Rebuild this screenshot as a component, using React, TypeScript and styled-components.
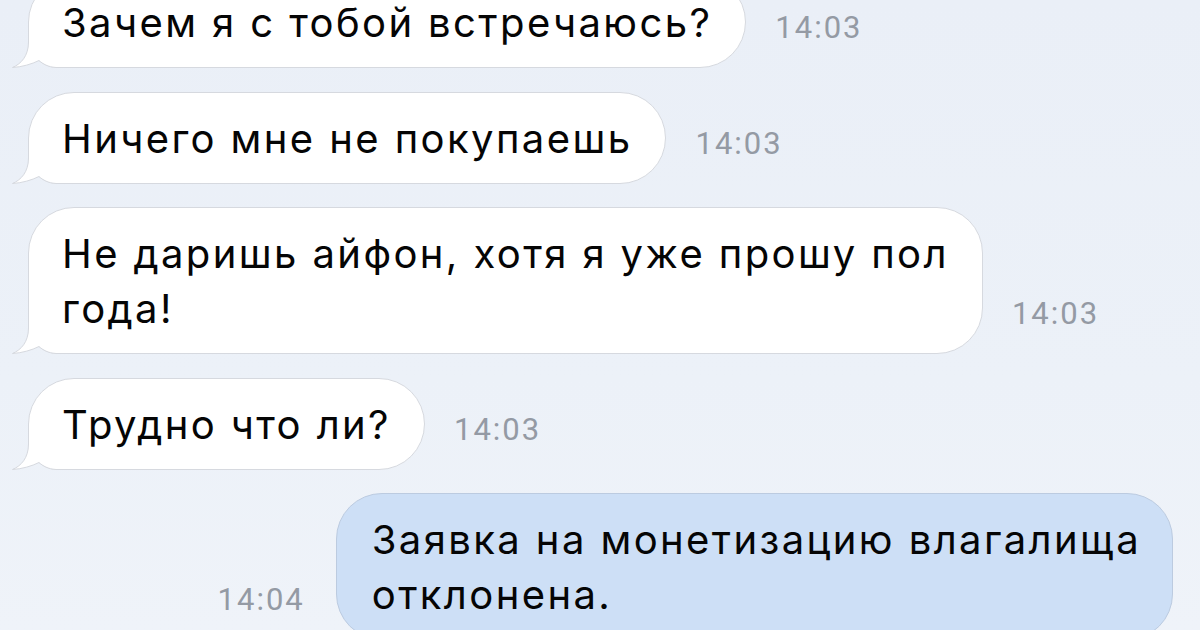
import React from "react";
import styled, { createGlobalStyle } from "styled-components";

const GlobalStyle = createGlobalStyle`
  html, body {
    margin: 0;
    padding: 0;
  }
  body {
    font-family: Inter, Roboto, "Noto Sans", sans-serif;
    -webkit-font-smoothing: antialiased;
  }
`;

const Screen = styled.div`
  width: 1200px;
  height: 630px;
  overflow: hidden;
  background: linear-gradient(180deg, #eaeff7 0%, #ecf1f8 60%, #eff3f9 100%);
`;

const Feed = styled.div`
  display: flex;
  flex-direction: column;
  gap: 23.5px;
  margin-top: -24px;
`;

const Row = styled.div<{ $out?: boolean }>`
  display: flex;
  align-items: flex-end;
  justify-content: ${(p) => (p.$out ? "flex-end" : "flex-start")};
  padding: ${(p) => (p.$out ? "0 27px 0 0" : "0 0 0 28px")};
`;

const Bubble = styled.div<{ $out?: boolean }>`
  position: relative;
  box-sizing: border-box;
  max-width: 960px;
  padding: ${(p) => (p.$out ? "18px 31px 17px 35px" : "18px 33px 17px 33px")};
  font-family: Inter, Roboto, sans-serif;
  font-size: 40px;
  line-height: 55px;
  letter-spacing: 2.4px;
  color: #050505;
  white-space: nowrap;
  background: ${(p) => (p.$out ? "#cddff6" : "#ffffff")};
  border: 1px solid ${(p) => (p.$out ? "#bccbe0" : "#d6d9df")};
  border-radius: 46px;
  border-bottom-left-radius: ${(p) => (p.$out ? "46px" : "30px")};
`;

const Time = styled.span<{ $out?: boolean }>`
  flex: none;
  font-family: Roboto, sans-serif;
  font-size: 31px;
  line-height: 30px;
  letter-spacing: 2px;
  color: #949aa4;
  padding-bottom: 25px;
  margin: ${(p) => (p.$out ? "0 31px 0 0" : "0 0 0 29px")};
`;

const TailSvg = styled.svg`
  position: absolute;
  left: -17px;
  bottom: -1px;
  width: 48px;
  height: 40px;
  overflow: visible;
`;

const Tail = () => (
  <TailSvg viewBox="0 0 48 40">
    <path
      d="M16.5,0 L16.5,14 C16.5,28 9,36 0.5,39.5 C10,39 20,36 27,32.5 C31,36 36,39 44,39.5 L48,39.5 L48,0 Z"
      fill="#ffffff"
    />
    <path
      d="M16.5,0 L16.5,14 C16.5,28 9,36 0.5,39.5 C10,39 20,36 27,32.5 C31,36 36,39 44,39.5 L48,39.5"
      fill="none"
      stroke="#d6d9df"
      strokeWidth="1"
    />
  </TailSvg>
);

type Message = {
  lines: string[];
  time: string;
  out?: boolean;
};

const messages: Message[] = [
  { lines: ["Зачем я с тобой встречаюсь?"], time: "14:03" },
  { lines: ["Ничего мне не покупаешь"], time: "14:03" },
  { lines: ["Не даришь айфон, хотя я уже прошу пол", "года!"], time: "14:03" },
  { lines: ["Трудно что ли?"], time: "14:03" },
  {
    lines: ["Заявка на монетизацию влагалища", "отклонена."],
    time: "14:04",
    out: true,
  },
];

const MessageRow = ({ msg }: { msg: Message }) => {
  const text = msg.lines.map((line, i) => (
    <React.Fragment key={i}>
      {i > 0 && <br />}
      {line}
    </React.Fragment>
  ));

  if (msg.out) {
    return (
      <Row $out>
        <Time $out>{msg.time}</Time>
        <Bubble $out>{text}</Bubble>
      </Row>
    );
  }

  return (
    <Row>
      <Bubble>
        {text}
        <Tail />
      </Bubble>
      <Time>{msg.time}</Time>
    </Row>
  );
};

export default function App() {
  return (
    <>
      <GlobalStyle />
      <Screen>
        <Feed>
          {messages.map((m, i) => (
            <MessageRow key={i} msg={m} />
          ))}
        </Feed>
      </Screen>
    </>
  );
}
